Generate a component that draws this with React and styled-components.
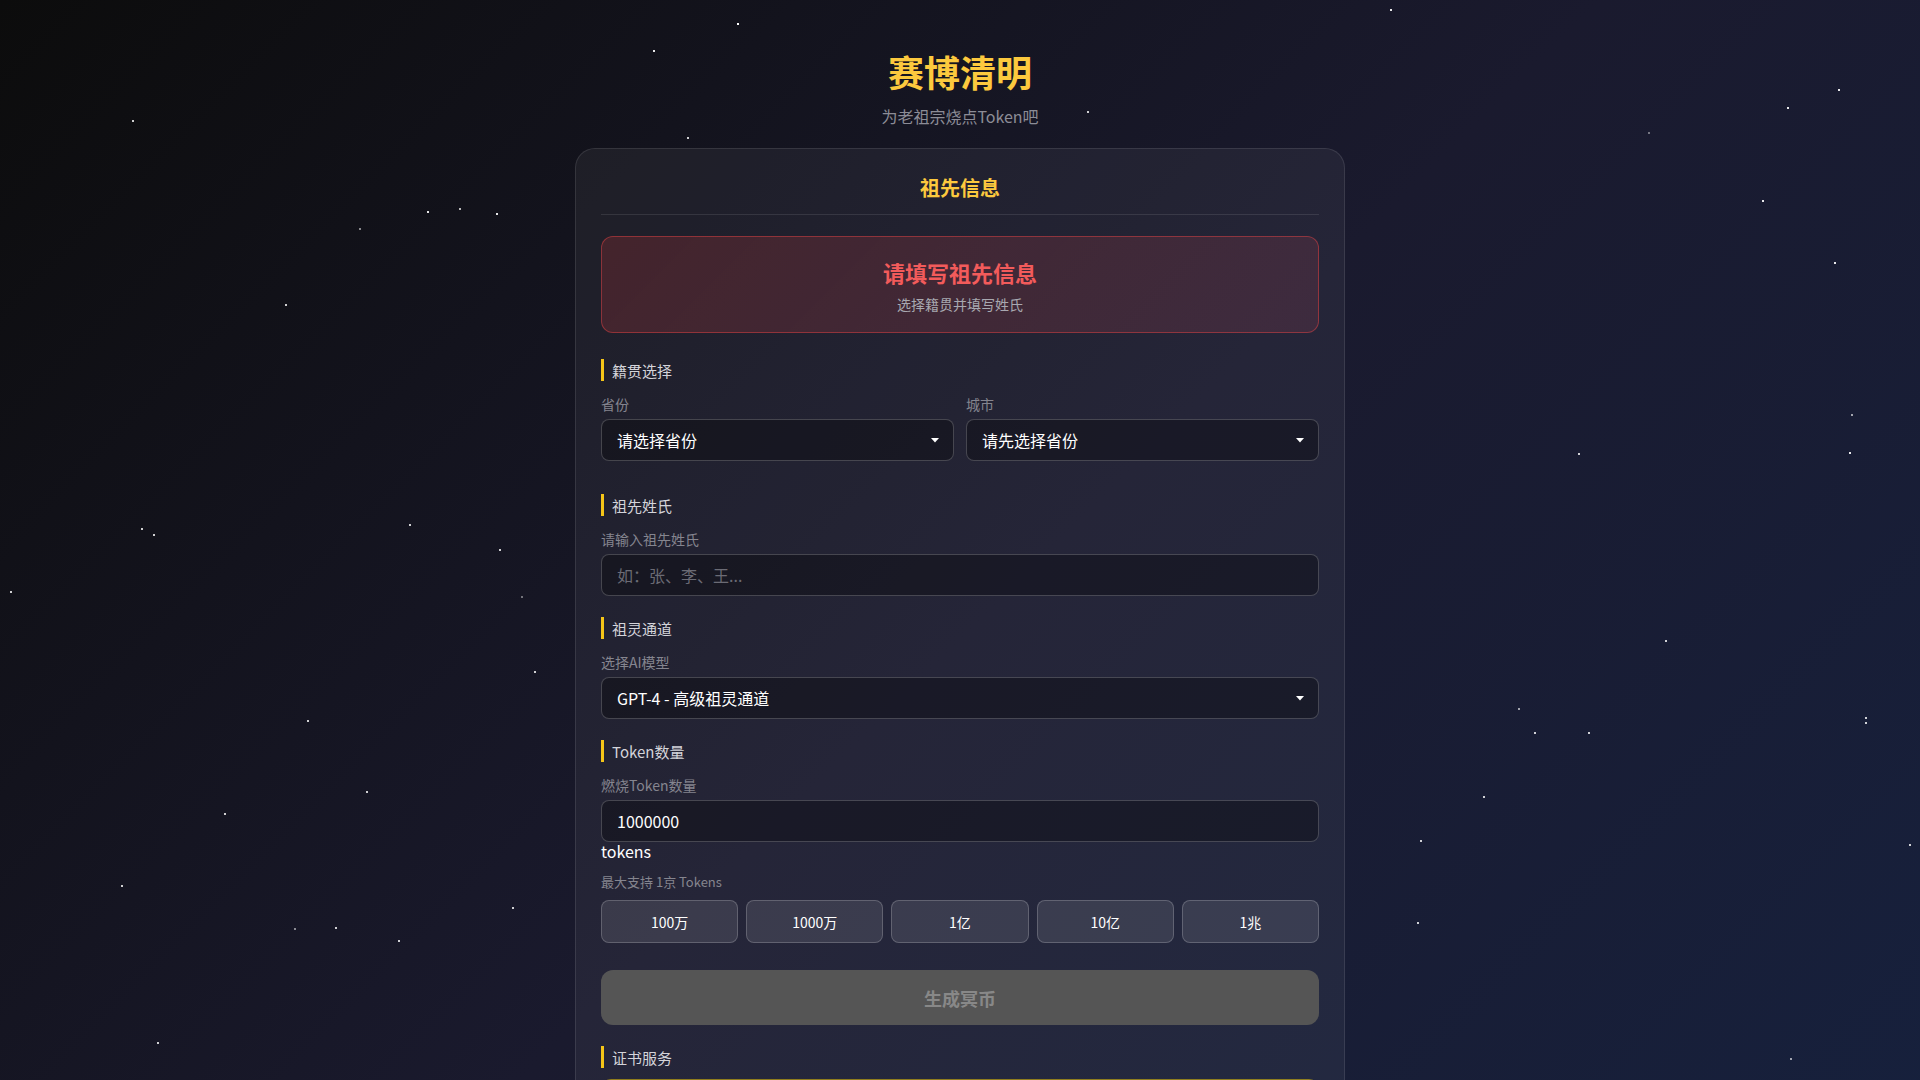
import React, { useState } from "react";
import styled, { createGlobalStyle } from "styled-components";

const GlobalStyle = createGlobalStyle`
  html, body {
    margin: 0;
    padding: 0;
    background: #0c0c0c;
  }
  body {
    font-family: "Noto Sans CJK SC", "Noto Sans", sans-serif;
    color: #fff;
  }
  * {
    box-sizing: border-box;
  }
`;

// star positions taken from the screenshot (px on a 1920x1080 page)
const stars = [
  [737, 23, 1], [653, 50, 0.9], [132, 120, 0.8], [687, 137, 0.8], [1087, 111, 0.8],
  [1390, 9, 0.9], [1838, 89, 0.9], [1787, 107, 0.9], [1648, 132, 0.4], [1762, 200, 0.9],
  [1834, 262, 0.9], [359, 228, 0.5], [427, 211, 0.9], [459, 208, 0.7], [496, 213, 0.9],
  [285, 304, 0.8], [1851, 414, 0.6], [1578, 453, 0.8], [1849, 452, 0.9], [141, 528, 0.8],
  [153, 534, 0.8], [409, 524, 0.8], [499, 549, 0.8], [521, 596, 0.4], [10, 591, 0.8],
  [534, 671, 0.8], [1665, 640, 0.8], [1518, 708, 0.6], [1534, 732, 0.8], [1588, 732, 0.8],
  [1865, 717, 0.8], [1865, 722, 0.8], [307, 720, 0.8], [366, 791, 0.8], [224, 813, 0.8],
  [1483, 796, 0.8], [1420, 840, 0.8], [1909, 844, 0.8], [121, 885, 0.8], [512, 907, 0.8],
  [294, 928, 0.5], [335, 927, 0.8], [398, 940, 0.8], [1417, 922, 0.8], [157, 1042, 0.8],
  [1790, 1058, 0.6],
];

const provinces = ["北京", "上海", "广东", "浙江", "江苏", "四川", "湖南", "山东"];
const amounts = ["100万", "1000万", "1亿", "10亿", "1兆"];

const Dropdown = ({ children, defaultValue }) => (
  <SelectWrap>
    <Select defaultValue={defaultValue}>{children}</Select>
    <Caret width="8" height="5" viewBox="0 0 8 5">
      <path d="M0 0h8L4 4.5z" fill="#fff" />
    </Caret>
  </SelectWrap>
);

export default function App() {
  const [surname, setSurname] = useState("");
  const [tokens, setTokens] = useState("1000000");

  return (
    <>
      <GlobalStyle />
      <Page>
        <StarField>
          {stars.map(([x, y, o], i) => (
            <Star key={i} style={{ left: x, top: y, opacity: o }} />
          ))}
        </StarField>

        <Header>
          <Title>赛博清明</Title>
          <Subtitle>为老祖宗烧点Token吧</Subtitle>
        </Header>

        <Card>
          <CardTitle>祖先信息</CardTitle>

          <Alert>
            <AlertTitle>请填写祖先信息</AlertTitle>
            <AlertText>选择籍贯并填写姓氏</AlertText>
          </Alert>

          <Section $top={26}>
            <SectionLabel>籍贯选择</SectionLabel>
            <TwoCols>
              <div>
                <FieldLabel>省份</FieldLabel>
                <Dropdown defaultValue="">
                  <option value="">请选择省份</option>
                  {provinces.map((p) => (
                    <option key={p}>{p}</option>
                  ))}
                </Dropdown>
              </div>
              <div>
                <FieldLabel>城市</FieldLabel>
                <Dropdown defaultValue="">
                  <option value="">请先选择省份</option>
                </Dropdown>
              </div>
            </TwoCols>
          </Section>

          <Section $top={33}>
            <SectionLabel>祖先姓氏</SectionLabel>
            <FieldLabel>请输入祖先姓氏</FieldLabel>
            <Input
              placeholder="如：张、李、王..."
              value={surname}
              onChange={(e) => setSurname(e.target.value)}
            />
          </Section>

          <Section $top={21}>
            <SectionLabel>祖灵通道</SectionLabel>
            <FieldLabel>选择AI模型</FieldLabel>
            <Dropdown defaultValue="gpt4">
              <option value="gpt4">GPT-4 - 高级祖灵通道</option>
              <option value="gpt35">GPT-3.5 - 普通祖灵通道</option>
            </Dropdown>
          </Section>

          <Section $top={21}>
            <SectionLabel>Token数量</SectionLabel>
            <FieldLabel>燃烧Token数量</FieldLabel>
            <Input value={tokens} onChange={(e) => setTokens(e.target.value)} />
            <Unit>tokens</Unit>
            <Hint>最大支持 1京 Tokens</Hint>
            <QuickRow>
              {amounts.map((a) => (
                <QuickButton key={a}>{a}</QuickButton>
              ))}
            </QuickRow>
          </Section>

          <GenerateButton disabled>生成冥币</GenerateButton>

          <Section $top={21}>
            <SectionLabel>证书服务</SectionLabel>
            <CertBox />
          </Section>
        </Card>
      </Page>
    </>
  );
}

const Page = styled.div`
  position: relative;
  min-height: 100vh;
  overflow: hidden;
  padding: 50px 20px 40px;
  background: linear-gradient(135deg, #0c0c0c 0%, #1a1a2e 50%, #16213e 100%);
`;

const StarField = styled.div`
  position: absolute;
  inset: 0;
  pointer-events: none;
`;

const Star = styled.span`
  position: absolute;
  width: 2px;
  height: 2px;
  background: #fff;
`;

const Header = styled.header`
  position: relative;
  text-align: center;
`;

const Title = styled.h1`
  margin: 0;
  font-size: 36px;
  line-height: 42px;
  font-weight: 700;
  color: #fcc93e;
`;

const Subtitle = styled.p`
  margin: 12px 0 0;
  font-size: 16px;
  line-height: 24px;
  color: #8c8c96;
`;

const Card = styled.main`
  position: relative;
  width: 770px;
  margin: 20px auto 0;
  padding: 25px 25px 40px;
  background: rgba(255, 255, 255, 0.05);
  border: 1px solid rgba(255, 255, 255, 0.1);
  border-radius: 20px;
`;

const CardTitle = styled.h2`
  margin: 0 0 21px;
  padding-bottom: 12px;
  border-bottom: 1px solid rgba(255, 255, 255, 0.1);
  text-align: center;
  font-size: 20px;
  line-height: 28px;
  font-weight: 700;
  color: #fcc93e;
`;

const Alert = styled.div`
  padding: 19px 20px 18px;
  text-align: center;
  background: linear-gradient(
    135deg,
    rgba(220, 60, 60, 0.2) 0%,
    rgba(200, 80, 100, 0.15) 100%
  );
  border: 1px solid rgba(239, 68, 68, 0.45);
  border-radius: 12px;
`;

const AlertTitle = styled.div`
  font-size: 22px;
  line-height: 32px;
  font-weight: 700;
  color: #f25b5b;
`;

const AlertText = styled.div`
  margin-top: 6px;
  font-size: 14px;
  line-height: 20px;
  color: #a8a8b0;
`;

const Section = styled.section`
  margin-top: ${(p) => p.$top}px;
`;

const SectionLabel = styled.div`
  padding: 2px 0 0 8px;
  border-left: 3px solid #f5c518;
  font-size: 15px;
  line-height: 20px;
  color: #d4d4da;
`;

const TwoCols = styled.div`
  display: grid;
  grid-template-columns: 1fr 1fr;
  gap: 12px;
`;

const FieldLabel = styled.label`
  display: block;
  margin: 13px 0 5px;
  font-size: 14px;
  line-height: 20px;
  color: #85858f;
`;

const SelectWrap = styled.div`
  position: relative;
`;

const Select = styled.select`
  display: block;
  width: 100%;
  height: 42px;
  padding: 0 34px 0 15px;
  appearance: none;
  font-family: inherit;
  font-size: 16px;
  color: #fff;
  background: rgba(0, 0, 0, 0.3);
  border: 1px solid rgba(255, 255, 255, 0.2);
  border-radius: 8px;
  outline: none;
`;

const Caret = styled.svg`
  position: absolute;
  right: 15px;
  top: 19px;
  pointer-events: none;
`;

const Input = styled.input`
  display: block;
  width: 100%;
  height: 42px;
  padding: 0 15px;
  font-family: inherit;
  font-size: 16px;
  color: #fff;
  background: rgba(0, 0, 0, 0.3);
  border: 1px solid rgba(255, 255, 255, 0.2);
  border-radius: 8px;
  outline: none;

  &::placeholder {
    color: #6b6b75;
  }
`;

const Unit = styled.div`
  font-size: 16px;
  line-height: 19px;
  color: #fff;
`;

const Hint = styled.div`
  margin-top: 12px;
  font-size: 13px;
  line-height: 18px;
  color: #85858f;
`;

const QuickRow = styled.div`
  display: grid;
  grid-template-columns: repeat(5, 1fr);
  gap: 8px;
  margin-top: 9px;
`;

const QuickButton = styled.button`
  height: 43px;
  font-family: inherit;
  font-size: 14px;
  color: #fff;
  background: rgba(255, 255, 255, 0.1);
  border: 1px solid rgba(255, 255, 255, 0.2);
  border-radius: 8px;
  cursor: pointer;
`;

const GenerateButton = styled.button`
  display: block;
  width: 100%;
  height: 55px;
  margin-top: 27px;
  font-family: inherit;
  font-size: 18px;
  font-weight: 700;
  color: #888;
  background: #555;
  border: none;
  border-radius: 12px;
  cursor: not-allowed;
`;

const CertBox = styled.div`
  margin-top: 11px;
  height: 120px;
  background: rgba(255, 215, 0, 0.08);
  border: 1px solid rgba(255, 215, 0, 0.45);
  border-radius: 10px;
`;
